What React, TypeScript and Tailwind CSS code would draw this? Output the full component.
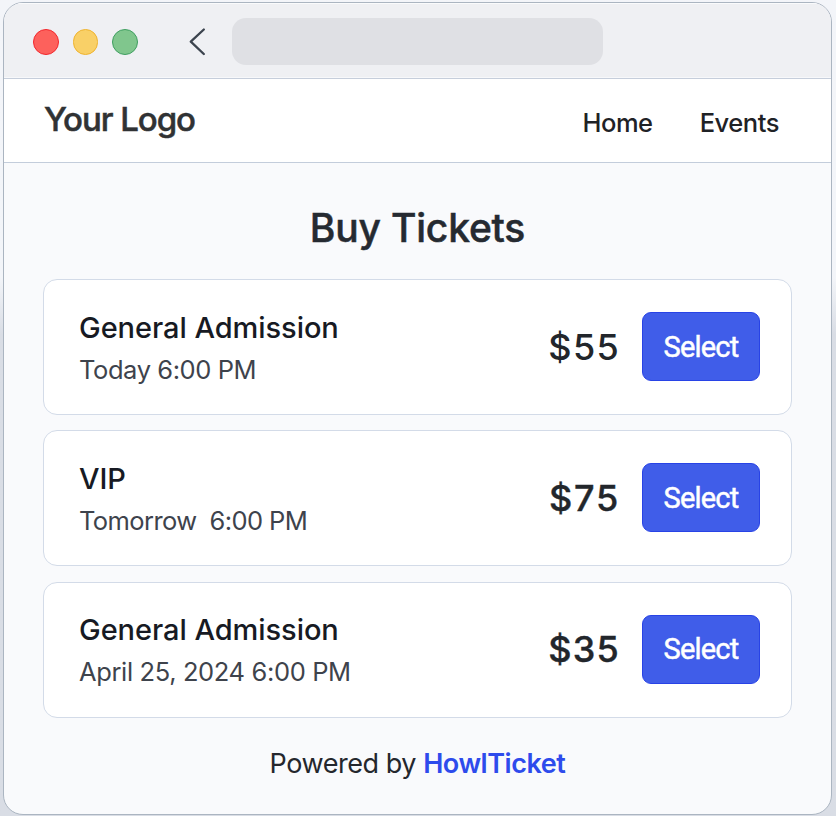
type Ticket = {
  name: string;
  when: string;
  whenClass: string;
  price: string;
  priceClass: string;
};

const tickets: Ticket[] = [
  { name: "General Admission", when: "Today 6:00 PM", whenClass: "tracking-[-0.42px]", price: "$55", priceClass: "tracking-[1.3px]" },
  { name: "VIP", when: "Tomorrow  6:00 PM", whenClass: "tracking-[-0.6px]", price: "$75", priceClass: "tracking-[1.8px] [-webkit-text-stroke:0.4px]" },
  { name: "General Admission", when: "April 25, 2024 6:00 PM", whenClass: "tracking-[-0.37px]", price: "$35", priceClass: "tracking-[1.2px] [-webkit-text-stroke:0.4px]" },
];

function BrowserBar() {
  return (
    <div className="flex h-[76px] items-center border-b border-[#c6cedb] bg-[#eff0f3] pt-[2px] pl-[29px] shadow-[inset_0_1px_0_#fafbfc,inset_0_-1px_0_#f7f8fa]">
      <div className="flex gap-[14px] pt-px">
        <span className="size-[25.7px] rounded-full border border-[#f3262b] bg-[#fd615c]" />
        <span className="size-[25.7px] rounded-full border border-[#efb32e] bg-[#f9d067]" />
        <span className="size-[25.7px] rounded-full border border-[#3f9f60] bg-[#80c68d]" />
      </div>
      <svg className="ml-[50px] h-[28px] w-[18px]" viewBox="0 0 18 28" fill="none">
        <path d="M15.8 1.5 L2.8 13.6 L15.8 26" stroke="#3c444e" strokeWidth="2.3" strokeLinecap="round" strokeLinejoin="round" />
      </svg>
      <div className="ml-[26px] h-[47px] w-[371px] rounded-[14px] bg-[#dfe0e4]" />
    </div>
  );
}

function SiteHeader() {
  return (
    <header className="flex h-[84px] items-center justify-between border-b border-[#c3cddb] bg-white pr-[52px] pl-[40px]">
      <div className="pb-px text-[33px] font-medium tracking-[-1.05px] text-[#303234] [-webkit-text-stroke:0.5px]">Your Logo</div>
      <nav className="flex gap-[47px] pt-[5px] text-[25.5px] font-medium tracking-[-0.45px] text-[#1f2226]">
        <a>Home</a>
        <a>Events</a>
      </nav>
    </header>
  );
}

function TicketCard({ ticket }: { ticket: Ticket }) {
  return (
    <li className="flex h-[136px] items-center justify-between rounded-[14px] border border-[#d3dbe8] bg-white pr-[31px] pb-px pl-[35px]">
      <div className="pt-[4px] whitespace-pre">
        <div className="text-[29px] leading-[42px] font-medium tracking-[-0.05px] text-[#171a23]">{ticket.name}</div>
        <div className={`text-[25.5px] leading-[42px] text-[#3e434c] ${ticket.whenClass}`}>{ticket.when}</div>
      </div>
      <div className="flex items-center gap-[22px]">
        <span className={`text-[36px] leading-[44px] font-medium text-[#22262b] ${ticket.priceClass}`}>{ticket.price}</span>
        <button className="h-[69px] w-[118px] rounded-[9px] border border-[#2843e6] bg-[#405de9] pt-[2px] font-[Roboto,sans-serif] text-[29px] font-normal tracking-[-0.8px] text-white [-webkit-text-stroke:0.5px]">
          Select
        </button>
      </div>
    </li>
  );
}

export default function App() {
  return (
    <div className="h-[816px] w-[836px] overflow-hidden bg-linear-to-b from-[#f3f5f9] from-34% to-[#d9dde5] to-41% pt-[2px] pl-[3px] font-[Inter,sans-serif]">
      <div className="h-[813px] w-[829px] overflow-hidden rounded-[20px] border border-[#abb5c1] bg-[#f9fafc]">
        <BrowserBar />
        <SiteHeader />
        <main className="px-[39px]">
          <h1 className="pt-[41px] text-center text-[39px] leading-[48px] font-medium tracking-[-0.2px] text-[#252a31] [-webkit-text-stroke:0.5px]">Buy Tickets</h1>
          <ul className="mt-[27px] flex flex-col gap-[15.3px]">
            {tickets.map((ticket, index) => (
              <TicketCard key={index} ticket={ticket} />
            ))}
          </ul>
          <p className="mt-[26px] text-center text-[27px] leading-[40px] tracking-[-0.45px] text-[#24272d]">
            Powered by <a className="font-semibold text-[#2d4bec]">HowlTicket</a>
          </p>
        </main>
      </div>
    </div>
  );
}
